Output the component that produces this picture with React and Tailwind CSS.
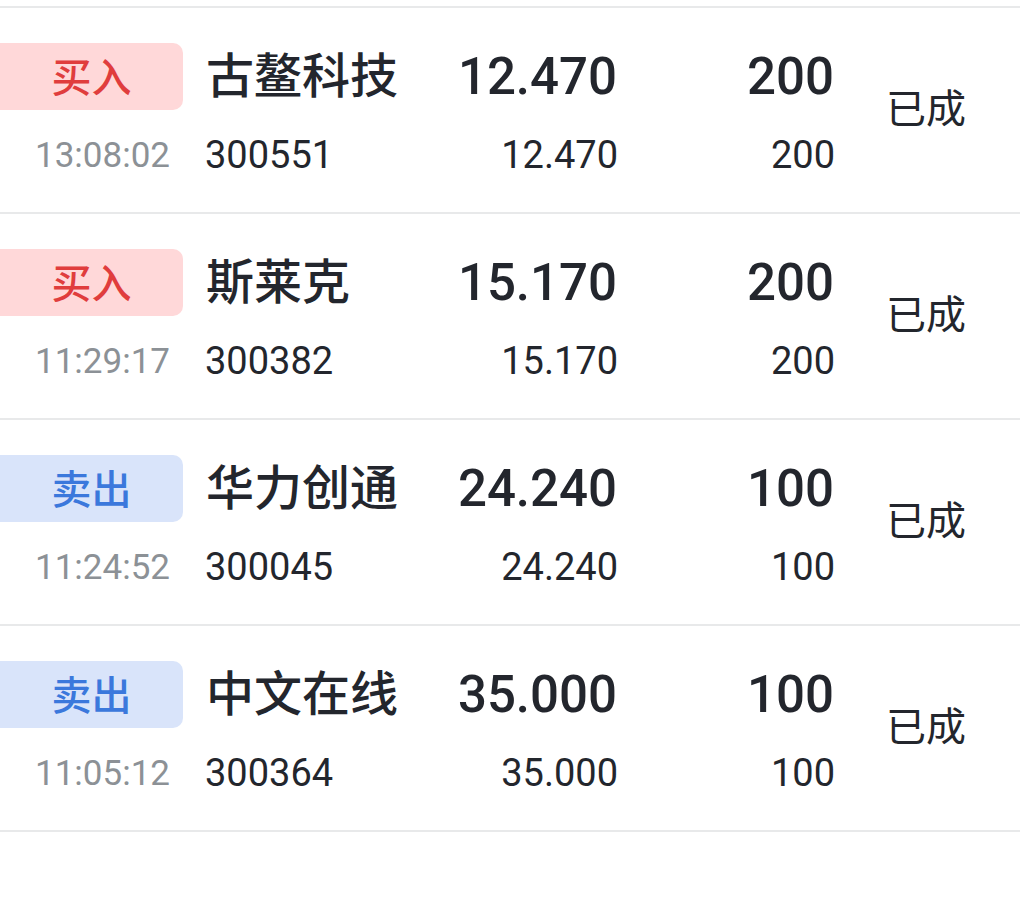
import React from 'react';

const orders = [
  { side: 'buy', name: '古鳌科技', time: '13:08:02', code: '300551', price: '12.470', qty: '200', dealPrice: '12.470', dealQty: '200', status: '已成' },
  { side: 'buy', name: '斯莱克', time: '11:29:17', code: '300382', price: '15.170', qty: '200', dealPrice: '15.170', dealQty: '200', status: '已成' },
  { side: 'sell', name: '华力创通', time: '11:24:52', code: '300045', price: '24.240', qty: '100', dealPrice: '24.240', dealQty: '100', status: '已成' },
  { side: 'sell', name: '中文在线', time: '11:05:12', code: '300364', price: '35.000', qty: '100', dealPrice: '35.000', dealQty: '100', status: '已成' },
];

const SideBadge = ({ side }) => {
  const isBuy = side === 'buy';
  return (
    <div
      className={`w-[183px] h-[67px] pt-[4px] rounded-r-[10px] flex items-center justify-center text-[40px] font-medium leading-none ${
        isBuy ? 'bg-[#ffd8d9] text-[#e03d3d]' : 'bg-[#d9e4fa] text-[#3b78dc]'
      }`}
    >
      {isBuy ? '买入' : '卖出'}
    </div>
  );
};

const OrderRow = ({ order }) => (
  <div className="h-[206px] border-t-2 border-[#e8e9ea] flex items-center">
    <div className="flex flex-col">
      {/* Top line: side, name, price, qty */}
      <div className="h-[67px] flex items-center">
        <SideBadge side={order.side} />
        <div className="w-[250px] ml-[23px] text-[48px] font-medium leading-none text-[#23262d]">{order.name}</div>
        <div className="w-[161px] text-right text-[51px] font-medium leading-none text-[#23262d]">{order.price}</div>
        <div className="w-[217px] text-right text-[51px] font-medium leading-none text-[#23262d]">{order.qty}</div>
      </div>
      {/* Bottom line: time, code, deal price, deal qty */}
      <div className="h-[44px] mt-[23px] flex items-center">
        <div className="w-[183px] pr-[13px] text-right text-[35px] leading-none text-[#8c9196]">{order.time}</div>
        <div className="w-[250px] ml-[22px] text-[38px] leading-none text-[#23262d]">{order.code}</div>
        <div className="w-[163px] text-right text-[38px] leading-none text-[#23262d]">{order.dealPrice}</div>
        <div className="w-[217px] text-right text-[38px] leading-none text-[#23262d]">{order.dealQty}</div>
      </div>
    </div>
    <div className="ml-[51px] text-[40px] leading-none text-[#23262d]">{order.status}</div>
  </div>
);

export default function App() {
  return (
    <div
      className="w-[1020px] h-[900px] bg-white pt-[6px] overflow-hidden"
      style={{ fontFamily: 'Roboto, "Noto Sans CJK SC", sans-serif' }}
    >
      <div className="border-b-2 border-[#e8e9ea]">
        {orders.map((o) => (
          <OrderRow key={o.code} order={o} />
        ))}
      </div>
    </div>
  );
}
